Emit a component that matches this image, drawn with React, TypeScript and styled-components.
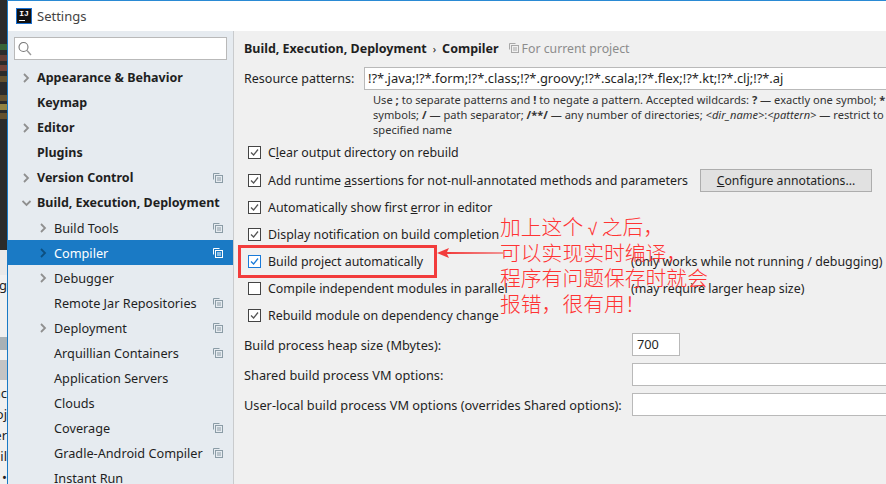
import React from "react";
import styled, { createGlobalStyle } from "styled-components";

const FONT = `"Noto Sans", "Noto Sans CJK SC", sans-serif`;

const GlobalStyle = createGlobalStyle`
	html, body {
		margin: 0;
		padding: 0;
		background: #f0f0f0;
	}
	body {
		font-family: ${FONT};
		font-size: 12.5px;
		color: #1f1f1f;
	}
`;

const Page = styled.div`
	position: relative;
	display: flex;
	width: 886px;
	height: 484px;
	overflow: hidden;
`;

const BackStrip = styled.div`
	display: flex;
	flex-direction: column;
	flex-shrink: 0;
	width: 7px;
	overflow: hidden;
`;

const StripDark = styled.div`
	display: flex;
	flex-direction: column;
	flex-shrink: 0;
	height: 250px;
	background: #2b2b2b;
	padding-top: 44px;
	box-sizing: border-box;
`;

const StripDarkItem = styled.div<{ $color: string; $gap: number }>`
	flex-shrink: 0;
	height: 6px;
	width: 7px;
	margin-bottom: ${p => p.$gap}px;
	background: ${p => p.$color};
	opacity: 0.6;
`;

const StripLight = styled.div`
	display: flex;
	flex-direction: column;
	flex: 1;
	background: #f0f0f0;
`;

const StripBand = styled.div<{ $color: string; $height: number }>`
	height: ${p => p.$height}px;
	background: ${p => p.$color};
	flex-shrink: 0;
`;

const StripText = styled.div`
	display: flex;
	justify-content: flex-end;
	flex-shrink: 0;
	height: 21px;
	line-height: 21px;
	font-size: 13px;
	white-space: nowrap;
	color: #222;
`;

const Window = styled.div`
	display: flex;
	flex-direction: column;
	flex: 1;
	min-width: 0;
	border-left: 1px solid #1a7ac5;
	border-top: 1px solid #2a8ad4;
`;

const TitleBar = styled.div`
	display: flex;
	align-items: center;
	gap: 5px;
	flex-shrink: 0;
	height: 30px;
	padding-left: 8px;
	background: #fff;
	font-size: 13px;
	color: #444;
`;

const AppIcon = styled.div`
	position: relative;
	width: 16px;
	height: 16px;
	box-sizing: border-box;
	border: 1px solid #1a6fd0;
	background: #111;
	color: #fff;
	font: bold 8px/8px "Liberation Mono", monospace;
	text-align: center;
	padding-top: 1px;

	&::after {
		content: "";
		position: absolute;
		left: 2px;
		bottom: 2px;
		width: 6px;
		height: 1px;
		background: #fff;
	}
`;

const Body = styled.div`
	display: flex;
	flex: 1;
	min-height: 0;
`;

const Sidebar = styled.div`
	display: flex;
	flex-direction: column;
	flex-shrink: 0;
	width: 225px;
	box-sizing: content-box;
	border-right: 1px solid #c9cbcd;
	background: #e6ebf0;
	padding-top: 6px;
	overflow: hidden;
`;

const SearchBox = styled.div`
	display: flex;
	align-items: center;
	flex-shrink: 0;
	box-sizing: border-box;
	width: 213px;
	height: 23px;
	margin: 0 0 5px 6px;
	padding-left: 3px;
	border: 1px solid #b9b9b9;
	background: #fff;
`;

const TreeRow = styled.div<{ $depth: number; $selected?: boolean }>`
	display: flex;
	align-items: center;
	flex-shrink: 0;
	height: 25px;
	padding-left: ${p => (p.$depth === 0 ? 14 : 31)}px;
	padding-right: 10px;
	background: ${p => (p.$selected ? "#1a7ac5" : "transparent")};
	color: ${p => (p.$selected ? "#fff" : "#1f1f1f")};
	font-weight: ${p => (p.$depth === 0 ? 700 : 400)};
	font-size: ${p => (p.$depth === 0 ? 12.5 : 12.7)}px;
	white-space: nowrap;
`;

const ChevronSlot = styled.span`
	display: flex;
	align-items: center;
	justify-content: flex-start;
	flex-shrink: 0;
	width: 15px;
	height: 12px;
`;

const TreeLabel = styled.span`
	flex: 1;
`;

const Main = styled.div`
	display: flex;
	flex-direction: column;
	flex: 1;
	min-width: 0;
	background: #f0f0f0;
	padding-left: 10px;
	overflow: hidden;
`;

const Breadcrumb = styled.div`
	display: flex;
	align-items: center;
	height: 34px;
	padding-bottom: 2px;
	flex-shrink: 0;
	white-space: nowrap;
	font-weight: 700;
`;

const CrumbSep = styled.span`
	margin: 0 6px;
	font-weight: 400;
	font-size: 11px;
`;

const ProjectHint = styled.span`
	display: flex;
	align-items: center;
	gap: 3px;
	margin-left: 10px;
	font-weight: 400;
	font-size: 12.3px;
	color: #8c8c8c;
`;

const PatternRow = styled.div`
	display: flex;
	align-items: center;
	height: 23px;
	flex-shrink: 0;
`;

const PatternLabel = styled.span`
	flex-shrink: 0;
	width: 120px;
	white-space: nowrap;
`;

const TextBox = styled.div<{ $width?: number }>`
	box-sizing: border-box;
	flex-shrink: 0;
	width: ${p => (p.$width ? `${p.$width}px` : "auto")};
	height: 23px;
	line-height: 21px;
	padding-left: 4px;
	border: 1px solid #b9b9b9;
	background: #fff;
	white-space: nowrap;
	overflow: hidden;
`;

const PatternBox = styled(TextBox)`
	flex: 1;
	border-right: none;
	font-size: 12.9px;
	padding-left: 3px;
`;

const HelpBlock = styled.div`
	display: flex;
	flex-direction: column;
	flex-shrink: 0;
	padding: 2px 0 0 129px;
	font-size: 11.1px;
	line-height: 15px;
	color: #333;
	white-space: nowrap;
`;

const CheckList = styled.div`
	display: flex;
	flex-direction: column;
	flex-shrink: 0;
	margin-top: 2px;
	font-size: 12.4px;
`;

const CheckRow = styled.div`
	display: flex;
	align-items: center;
	height: 27px;
	padding-left: 4px;
	white-space: nowrap;

	&:nth-child(2) {
		height: 28px;
	}
`;

const CheckBox = styled.span<{ $focused?: boolean }>`
	display: flex;
	align-items: center;
	justify-content: center;
	flex-shrink: 0;
	box-sizing: border-box;
	width: 13px;
	height: 13px;
	margin-right: 7px;
	border: 1px solid ${p => (p.$focused ? "#1a7ad8" : "#444")};
	background: #fff;
	color: ${p => (p.$focused ? "#1a7ad8" : "#555")};
`;

const CheckText = styled.span<{ $aligned?: boolean }>`
	flex-shrink: 0;
	width: ${p => (p.$aligned ? "363px" : "auto")};
`;

const RowNote = styled.span`
	flex-shrink: 0;
`;

const ConfigureButton = styled.div`
	box-sizing: border-box;
	flex-shrink: 0;
	width: 172px;
	height: 23px;
	line-height: 21px;
	margin-left: 12px;
	border: 1px solid #adadad;
	background: #e1e1e1;
	font-size: 12.2px;
	text-align: center;
`;

const Mnemonic = styled.span`
	text-decoration: underline;
`;

const FormGrid = styled.div`
	display: grid;
	grid-template-columns: 388px 1fr;
	grid-auto-rows: 23px;
	row-gap: 7px;
	align-items: center;
	margin-top: 4px;
	font-size: 12.75px;
	white-space: nowrap;
`;

const FieldBox = styled(TextBox)`
	border-right: none;
`;

const Strong = styled.b`
	font-weight: 700;
`;

const RedBox = styled.div`
	position: absolute;
	left: 238px;
	top: 245px;
	width: 199px;
	height: 33px;
	box-sizing: border-box;
	border: 3px solid #f23c3c;
`;

const ArrowMark = styled.svg`
	position: absolute;
	left: 437px;
	top: 247px;
	width: 66px;
	height: 12px;
`;

const Annotation = styled.div`
	position: absolute;
	left: 500px;
	top: 214px;
	display: flex;
	flex-direction: column;
	font-family: "Noto Sans CJK SC", sans-serif;
	font-size: 20.8px;
	font-weight: 300;
	color: #ff3333;
	white-space: nowrap;
`;

const AnnotationLine = styled.div`
	height: 25.7px;
	line-height: 25.7px;
`;

const RootMark = styled.span`
	font-family: "Liberation Sans", sans-serif;
	font-size: 17px;
	line-height: 1;
`;

const Chevron = ({ open, color }: { open?: boolean; color: string }) => (
	<svg width="10" height="10" viewBox="0 0 10 10" fill="none">
		<path
			d={open ? "M0.5 3 L4.5 7 L8.5 3" : "M2 1 L6 5 L2 9"}
			stroke={color}
			strokeWidth="1.8"
		/>
	</svg>
);

const SearchIcon = () => (
	<svg width="14" height="15" viewBox="0 0 14 15" fill="none">
		<circle cx="5.5" cy="6" r="4.5" stroke="#777" strokeWidth="1.1" />
		<path d="M9 9.5 L13 14" stroke="#999" strokeWidth="1.4" />
	</svg>
);

const ProjectIcon = ({ color = "#8b9ca6" }: { color?: string }) => (
	<svg width="10" height="10" viewBox="0 0 10 10" fill="none">
		<path d="M0.5 6.5 V0.5 H6.5" stroke={color} />
		<rect x="2.5" y="2.5" width="7" height="7" stroke={color} />
		<path d="M4 5 H8 M4 7 H8" stroke={color} />
	</svg>
);

const Tick = () => (
	<svg width="11" height="11" viewBox="0 0 11 11" fill="none">
		<path d="M2 5.5 L4.6 8 L9 2.5" stroke="currentColor" strokeWidth="1.3" />
	</svg>
);

type TreeItem = {
	label: string;
	depth: number;
	arrow?: "closed" | "open";
	project?: boolean;
	selected?: boolean;
};

const TREE: TreeItem[] = [
	{ label: "Appearance & Behavior", depth: 0, arrow: "closed" },
	{ label: "Keymap", depth: 0 },
	{ label: "Editor", depth: 0, arrow: "closed" },
	{ label: "Plugins", depth: 0 },
	{ label: "Version Control", depth: 0, arrow: "closed", project: true },
	{ label: "Build, Execution, Deployment", depth: 0, arrow: "open" },
	{ label: "Build Tools", depth: 1, arrow: "closed", project: true },
	{ label: "Compiler", depth: 1, arrow: "closed", project: true, selected: true },
	{ label: "Debugger", depth: 1, arrow: "closed" },
	{ label: "Remote Jar Repositories", depth: 1, project: true },
	{ label: "Deployment", depth: 1, arrow: "closed", project: true },
	{ label: "Arquillian Containers", depth: 1, project: true },
	{ label: "Application Servers", depth: 1 },
	{ label: "Clouds", depth: 1 },
	{ label: "Coverage", depth: 1, project: true },
	{ label: "Gradle-Android Compiler", depth: 1, project: true },
	{ label: "Instant Run", depth: 1 },
];

const CHECKS: {
	key: string;
	text: React.ReactNode;
	checked: boolean;
	focused?: boolean;
	note?: string;
	button?: boolean;
}[] = [
	{
		key: "clear",
		text: (
			<>
				C<Mnemonic>l</Mnemonic>ear output directory on rebuild
			</>
		),
		checked: true,
	},
	{
		key: "assert",
		text: (
			<>
				Add runtime <Mnemonic>a</Mnemonic>ssertions for not-null-annotated methods and parameters
			</>
		),
		checked: true,
		button: true,
	},
	{
		key: "error",
		text: (
			<>
				Automatically show first <Mnemonic>e</Mnemonic>rror in editor
			</>
		),
		checked: true,
	},
	{ key: "notify", text: "Display notification on build completion", checked: true },
	{
		key: "auto",
		text: "Build project automatically",
		checked: true,
		focused: true,
		note: "(only works while not running / debugging)",
	},
	{
		key: "parallel",
		text: "Compile independent modules in parallel",
		checked: false,
		note: "(may require larger heap size)",
	},
	{ key: "rebuild", text: "Rebuild module on dependency change", checked: true },
];

export default function App() {
	return (
		<Page>
			<GlobalStyle />
			<BackStrip>
				<StripDark>
					<StripDarkItem $color="#3f8a3f" $gap={5} />
					<StripDarkItem $color="#8a4a3a" $gap={4} />
					<StripDarkItem $color="#a05040" $gap={5} />
					<StripDarkItem $color="#8a6a30" $gap={13} />
					<StripDarkItem $color="#8a6a30" $gap={3} />
					<StripDarkItem $color="#d8c050" $gap={3} />
					<StripDarkItem $color="#8a6a30" $gap={0} />
				</StripDark>
				<StripLight>
					<StripBand $color="#e9e9e9" $height={25} />
					<StripText>ig</StripText>
					<StripBand $color="#f0f0f0" $height={41} />
					<StripBand $color="#a9b1b5" $height={13} />
					<StripBand $color="#f0f0f0" $height={10} />
					<StripBand $color="#c4c4c4" $height={20} />
					<StripBand $color="#f0f0f0" $height={3} />
					<StripText>ac</StripText>
					<StripText>oj</StripText>
					<StripText>er</StripText>
					<StripText>il</StripText>
					<StripText>•</StripText>
				</StripLight>
			</BackStrip>
			<Window>
				<TitleBar>
					<AppIcon>IJ</AppIcon>
					<span>Settings</span>
				</TitleBar>
				<Body>
					<Sidebar>
						<SearchBox>
							<SearchIcon />
						</SearchBox>
						{TREE.map(item => (
							<TreeRow key={item.label} $depth={item.depth} $selected={item.selected}>
								<ChevronSlot>
									{item.arrow && (
										<Chevron
											open={item.arrow === "open"}
											color={item.selected ? "#0d4f80" : "#8f8f8f"}
										/>
									)}
								</ChevronSlot>
								<TreeLabel>{item.label}</TreeLabel>
								{item.project && <ProjectIcon color={item.selected ? "#fff" : "#8b9ca6"} />}
							</TreeRow>
						))}
					</Sidebar>
					<Main>
						<Breadcrumb>
							Build, Execution, Deployment
							<CrumbSep>›</CrumbSep>
							Compiler
							<ProjectHint>
								<ProjectIcon color="#a8a8a8" />
								For current project
							</ProjectHint>
						</Breadcrumb>
						<PatternRow>
							<PatternLabel>Resource patterns:</PatternLabel>
							<PatternBox>!?*.java;!?*.form;!?*.class;!?*.groovy;!?*.scala;!?*.flex;!?*.kt;!?*.clj;!?*.aj</PatternBox>
						</PatternRow>
						<HelpBlock>
							<span>
								Use <Strong>;</Strong> to separate patterns and <Strong>!</Strong> to negate a pattern.
								Accepted wildcards: <Strong>?</Strong> — exactly one symbol; <Strong>*</Strong> — zero or more
							</span>
							<span>
								symbols; <Strong>/</Strong> — path separator; <Strong>/**/</Strong> — any number of directories;{" "}
								<i>&lt;dir_name&gt;</i>:<i>&lt;pattern&gt;</i> — restrict to source roots with the
							</span>
							<span>specified name</span>
						</HelpBlock>
						<CheckList>
							{CHECKS.map(check => (
								<CheckRow key={check.key}>
									<CheckBox $focused={check.focused}>{check.checked && <Tick />}</CheckBox>
									<CheckText $aligned={!!check.note}>{check.text}</CheckText>
									{check.note && <RowNote>{check.note}</RowNote>}
									{check.button && (
										<ConfigureButton>
											<Mnemonic>C</Mnemonic>onfigure annotations...
										</ConfigureButton>
									)}
								</CheckRow>
							))}
						</CheckList>
						<FormGrid>
							<span>Build process heap size (Mbytes):</span>
							<TextBox $width={48}>700</TextBox>
							<span>Shared build process VM options:</span>
							<FieldBox />
							<span>User-local build process VM options (overrides Shared options):</span>
							<FieldBox />
						</FormGrid>
					</Main>
				</Body>
			</Window>
			<RedBox />
			<ArrowMark viewBox="0 0 66 12">
				<path d="M0 6 L12 1 L10 5 L66 5.5 L66 6.5 L10 7 L12 11 Z" fill="#f23c3c" />
			</ArrowMark>
			<Annotation>
				<AnnotationLine>
					加上这个 <RootMark>√</RootMark> 之后，
				</AnnotationLine>
				<AnnotationLine>可以实现实时编译，</AnnotationLine>
				<AnnotationLine>程序有问题保存时就会</AnnotationLine>
				<AnnotationLine>报错，很有用！</AnnotationLine>
			</Annotation>
		</Page>
	);
}
